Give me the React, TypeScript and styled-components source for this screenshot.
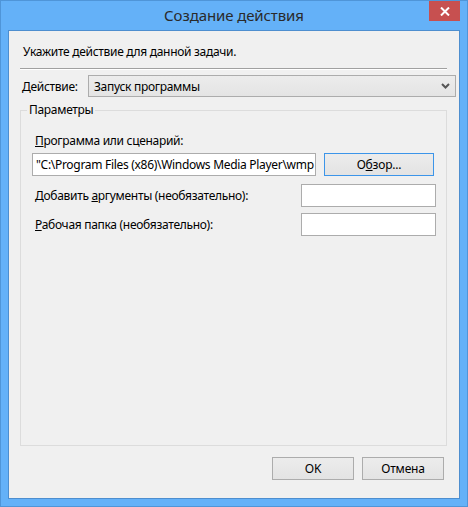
import React from "react";
import styled, { createGlobalStyle } from "styled-components";

const GlobalStyle = createGlobalStyle`
  html, body {
    margin: 0;
    padding: 0;
  }
  body {
    font-family: "Noto Sans", "Open Sans", sans-serif;
    font-size: 12px;
    color: #000;
  }
`;

const Window = styled.div`
  width: 468px;
  height: 507px;
  box-sizing: border-box;
  background-color: #64b1f8;
  border: 1px solid #4f95d8;
  display: flex;
  flex-direction: column;
  padding: 0 7px 7px 7px;
`;

const TitleBar = styled.div`
  height: 29px;
  display: grid;
  grid-template-columns: 1fr auto 1fr;
  align-items: start;
`;

const Title = styled.div`
  grid-column: 2;
  font-size: 15px;
  line-height: 29px;
  color: #2a2a2a;
  letter-spacing: -0.1px;
`;

const CloseButton = styled.div`
  grid-column: 3;
  justify-self: end;
  width: 31px;
  height: 20px;
  background-color: #c75050;
  display: flex;
  align-items: center;
  justify-content: center;
`;

const Client = styled.div`
  flex: 1;
  background-color: #f0f0f0;
  border: 1px solid #4d8ecf;
  display: flex;
  flex-direction: column;
  padding: 0 3px 0 11px;
`;

const Instruction = styled.div`
  margin: 13px 0 0 3px;
  height: 16px;
  line-height: 16px;
  letter-spacing: -0.3px;
`;

const Separator = styled.div`
  margin: 8px 9px 0 0;
  border-top: 1px solid #a0a0a0;
  border-bottom: 1px solid #ffffff;
`;

const ActionRow = styled.div`
  margin-top: 5px;
  display: flex;
  align-items: center;
`;

const Label = styled.span`
  letter-spacing: -0.3px;
  white-space: nowrap;
`;

const ActionLabel = styled(Label)`
  width: 68px;
  padding-left: 2px;
  box-sizing: border-box;
`;

const Select = styled.div`
  flex: 1;
  height: 22px;
  box-sizing: border-box;
  border: 1px solid #acacac;
  background: linear-gradient(#ececec, #e4e4e4);
  display: flex;
  align-items: center;
  justify-content: space-between;
  padding: 0 5px 0 5px;
  letter-spacing: -0.3px;
`;

const GroupBox = styled.fieldset`
  margin: 6px 9px 0 0;
  padding: 0 12px 0 11px;
  border: 1px solid #dcdcdc;
  height: 343px;
  box-sizing: border-box;
  display: flex;
  flex-direction: column;
  min-width: 0;
`;

const Legend = styled.legend`
  padding: 0 2px;
  margin-left: -5px;
  letter-spacing: -0.3px;
  line-height: 14px;
`;

const FieldLabel = styled(Label)`
  display: block;
  margin: 16px 0 0 3px;
  line-height: 16px;
`;

const Row = styled.div<{ $top: number }>`
  margin-top: ${(p) => p.$top}px;
  display: flex;
  align-items: center;
  gap: 8px;
`;

const TextBox = styled.div<{ $width?: number }>`
  height: 23px;
  box-sizing: border-box;
  border: 1px solid #acacac;
  background-color: #fff;
  ${(p) => (p.$width ? `width: ${p.$width}px; margin-right: -2px;` : "flex: 1;")}
  display: flex;
  align-items: center;
  padding-left: 3px;
  white-space: nowrap;
  overflow: hidden;
  letter-spacing: -0.3px;
  min-width: 0;
`;

const RowLabel = styled(Label)`
  flex: 1;
  padding-left: 3px;
`;

const Button = styled.div<{ $default?: boolean }>`
  width: ${(p) => (p.$default ? 110 : 82)}px;
  height: 23px;
  box-sizing: border-box;
  border: 1px solid ${(p) => (p.$default ? "#3c95e9" : "#acacac")};
  background: linear-gradient(#ececec, #e3e3e3);
  display: flex;
  align-items: center;
  justify-content: center;
  letter-spacing: -0.2px;
  flex-shrink: 0;
`;

const Footer = styled.div`
  margin: 11px 12px 0 0;
  display: flex;
  justify-content: flex-end;
  gap: 8px;
`;

export default function App() {
  return (
    <>
      <GlobalStyle />
      <Window>
        <TitleBar>
          <Title>Создание действия</Title>
          <CloseButton>
            <svg width="10" height="9" viewBox="0 0 10 9">
              <path
                d="M1 0.5 L9 8.5 M9 0.5 L1 8.5"
                stroke="#fff"
                strokeWidth="2"
              />
            </svg>
          </CloseButton>
        </TitleBar>
        <Client>
          <Instruction>Укажите действие для данной задачи.</Instruction>
          <Separator />
          <ActionRow>
            <ActionLabel>
              <u>Д</u>ействие:
            </ActionLabel>
            <Select>
              <span>Запуск программы</span>
              <svg width="9" height="6" viewBox="0 0 9 6">
                <path
                  d="M1 1 L4.5 4.5 L8 1"
                  fill="none"
                  stroke="#555"
                  strokeWidth="2"
                />
              </svg>
            </Select>
          </ActionRow>
          <GroupBox>
            <Legend>Параметры</Legend>
            <FieldLabel>
              <u>П</u>рограмма или сценарий:
            </FieldLabel>
            <Row $top={4}>
              <TextBox>"C:\Program Files (x86)\Windows Media Player\wmp</TextBox>
              <Button $default>
                <span>
                  О<u>б</u>зор...
                </span>
              </Button>
            </Row>
            <Row $top={8}>
              <RowLabel>
                Добавить <u>а</u>ргументы (необязательно):
              </RowLabel>
              <TextBox $width={135} />
            </Row>
            <Row $top={6}>
              <RowLabel>
                <u>Р</u>абочая папка (необязательно):
              </RowLabel>
              <TextBox $width={135} />
            </Row>
          </GroupBox>
          <Footer>
            <Button>OK</Button>
            <Button>Отмена</Button>
          </Footer>
        </Client>
      </Window>
    </>
  );
}
